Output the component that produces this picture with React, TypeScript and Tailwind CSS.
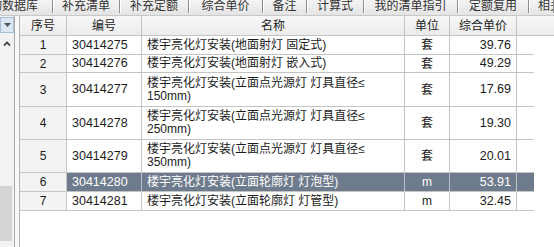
import React from "react";

const tabs = [
  { label: "询数据库", cls: "w-[53px] justify-end pr-[14px]" },
  { label: "补充清单", cls: "w-[67px] justify-center" },
  { label: "补充定额", cls: "w-[69px] justify-center" },
  { label: "综合单价", cls: "w-[74px] justify-center" },
  { label: "备注", cls: "w-[44px] justify-center" },
  { label: "计算式", cls: "w-[57px] justify-center" },
  { label: "我的清单指引", cls: "w-[94px] justify-center" },
  { label: "定额复用", cls: "w-[71px] justify-center" },
  { label: "相关定额", cls: "flex-1 justify-start pl-[9px]" },
];

const rows = [
  { no: 1, code: "30414275", name: ["楼宇亮化灯安装(地面射灯 固定式)"], unit: "套", price: "39.76", h: "h-[19px]" },
  { no: 2, code: "30414276", name: ["楼宇亮化灯安装(地面射灯 嵌入式)"], unit: "套", price: "49.29", h: "h-[18px]" },
  { no: 3, code: "30414277", name: ["楼宇亮化灯安装(立面点光源灯 灯具直径≤", "150mm)"], unit: "套", price: "17.69", h: "h-[34px]" },
  { no: 4, code: "30414278", name: ["楼宇亮化灯安装(立面点光源灯 灯具直径≤", "250mm)"], unit: "套", price: "19.30", h: "h-[33px]" },
  { no: 5, code: "30414279", name: ["楼宇亮化灯安装(立面点光源灯 灯具直径≤", "350mm)"], unit: "套", price: "20.01", h: "h-[33px]" },
  { no: 6, code: "30414280", name: ["楼宇亮化灯安装(立面轮廓灯 灯泡型)"], unit: "m", price: "53.91", h: "h-[19px]", sel: true },
  { no: 7, code: "30414281", name: ["楼宇亮化灯安装(立面轮廓灯 灯管型)"], unit: "m", price: "32.45", h: "h-[19px]" },
];

const App = () => {
  return (
    <div
      className="w-[554px] h-[247px] overflow-hidden flex flex-col bg-white text-[12px] text-[#1c1c1c]"
      style={{ fontFamily: '"Liberation Sans", "Noto Sans CJK SC", sans-serif' }}
    >
      {/* tab strip */}
      <div className="h-[16px] flex bg-gradient-to-b from-[#f4f4f4] to-[#e4e4e4] border-b border-[#c8c8c8] text-[#333]">
        {tabs.map((t) => (
          <div
            key={t.label}
            className={`${t.cls} h-full flex items-center overflow-hidden whitespace-nowrap border-r border-[#8e8e8e] shadow-[1px_0_0_#ffffff] leading-[14px] -mt-[2px]`}
          >
            {t.label}
          </div>
        ))}
      </div>

      <div className="flex-1 flex">
        {/* left side panel */}
        <div className="w-[15px] bg-[#f2f2f2] border-r border-[#a8a8a8] flex flex-col">
          <div className="mt-[1px] h-[16px] w-[14px] bg-[#dbe6f4] border border-[#a9bfd8] flex items-center justify-center">
            <svg width="7" height="4" viewBox="0 0 7 4">
              <path d="M0 0 L7 0 L3.5 4 Z" fill="#555" />
            </svg>
          </div>
          <div className="mt-[2px] h-[16px] w-[14px] flex items-center justify-center">
            <svg width="8" height="5" viewBox="0 0 8 5">
              <path d="M1 4.5 L4 1.5 L7 4.5" fill="none" stroke="#333" strokeWidth="1.6" />
            </svg>
          </div>
          <div className="mt-[135px] h-[55px] w-[12px] bg-[#d4d4d4]" />
        </div>
        <div className="w-[5px] bg-[#f8f8f8] border-r border-[#b4b4b4]" />

        {/* grid */}
        <div className="flex-1 flex flex-col">
          <div className="h-[20px] flex bg-gradient-to-b from-[#f7f7f7] to-[#ececec] border-b border-[#c4c4c4] text-[#222]">
            <div className="w-[47px] flex items-center justify-center border-r border-[#c4c4c4]">序号</div>
            <div className="w-[75px] flex items-center justify-center border-r border-[#c4c4c4]">编号</div>
            <div className="w-[263px] flex items-center justify-center border-r border-[#c4c4c4]">名称</div>
            <div className="w-[45px] flex items-center justify-center border-r border-[#c4c4c4]">单位</div>
            <div className="w-[67px] flex items-center justify-center border-r border-[#c4c4c4]">综合单价</div>
            <div className="flex-1" />
          </div>
          {rows.map((r) => (
            <div key={r.no} className={`${r.h} flex`}>
              <div className="w-[47px] flex items-center justify-center bg-[#f3f3f3] border-r border-b border-[#c4c4c4]">
                {r.no}
              </div>
              <div
                className={`w-[467px] flex border-b ${
                  r.sel ? "bg-[#6e7b8c] text-white border-[#c4c4c4]" : "border-[#c4c4c4]"
                }`}
              >
                <div className={`w-[75px] flex items-center pl-[5px] text-[12.5px] border-r ${r.sel ? "border-[#b9c0c8]" : "border-[#c4c4c4]"}`}>
                  {r.code}
                </div>
                <div className={`w-[263px] flex flex-col justify-center pl-[5px] leading-[13px] border-r ${r.sel ? "border-[#b9c0c8]" : "border-[#c4c4c4]"}`}>
                  {r.name.map((n) => (
                    <div key={n} className="whitespace-nowrap">{n}</div>
                  ))}
                </div>
                <div className={`w-[45px] flex items-center justify-center border-r ${r.sel ? "border-[#b9c0c8]" : "border-[#c4c4c4]"}`}>
                  {r.unit}
                </div>
                <div className="w-[67px] flex items-center justify-end pr-[5px] text-[12.5px] border-r border-[#c4c4c4]">
                  {r.price}
                </div>
              </div>
            </div>
          ))}
        </div>
      </div>
    </div>
  );
};

export default App;
